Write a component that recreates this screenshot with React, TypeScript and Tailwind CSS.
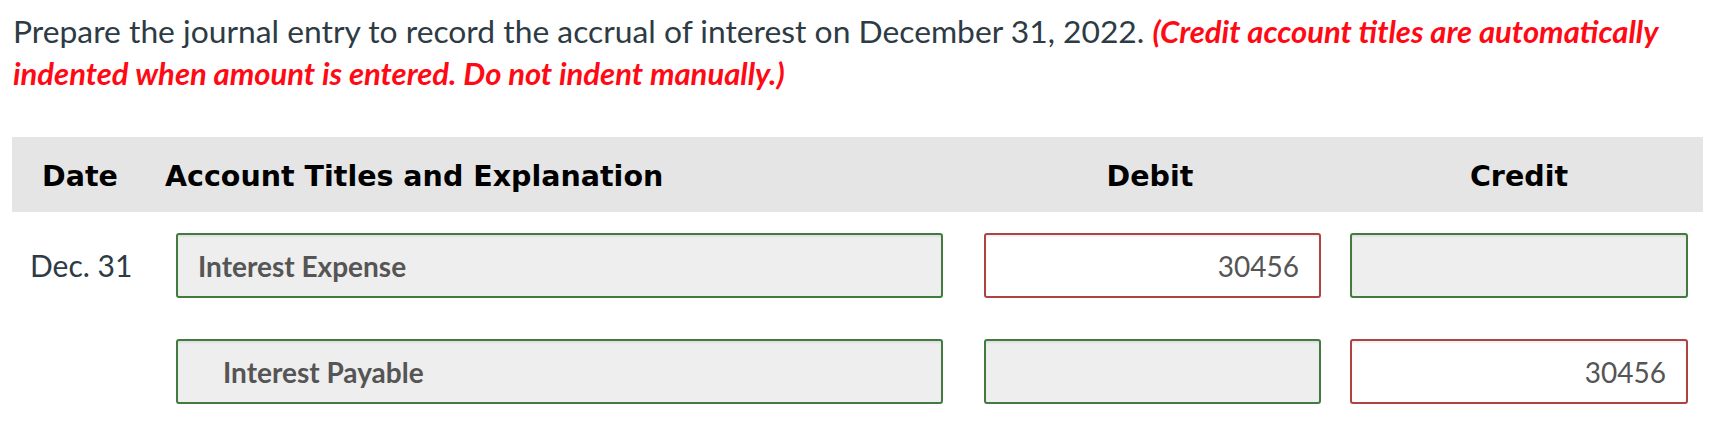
const lato = { fontFamily: 'Lato, "Open Sans", sans-serif' };
const head = { fontFamily: '"DejaVu Sans", Verdana, sans-serif' };

const rows = [
  { date: 'Dec. 31', account: 'Interest Expense', indent: false, debit: '30456', credit: '' },
  { date: '', account: 'Interest Payable', indent: true, debit: '', credit: '30456' },
];

const Field = ({ value, ok, align = 'right', indent = false, bold = false }: { value: string; ok: boolean; align?: 'left' | 'right'; indent?: boolean; bold?: boolean }) => (
  <div
    className={`h-[65px] rounded-[3px] border-2 flex items-center text-[28px] text-[#555555] shadow-[inset_0_2px_2px_rgba(0,0,0,0.06)] ${
      ok ? 'border-[#417b3f] bg-[#eeeeee]' : 'border-[#ad4343] bg-white'
    } ${align === 'right' ? 'justify-end pr-[20px]' : indent ? 'pl-[45px]' : 'pl-[20px]'} ${bold ? 'font-bold' : ''}`}
  >
    {value}
  </div>
);

export default function App() {
  return (
    <div className="bg-white min-h-[440px] text-[#2d3b45]" style={lato}>
      <p className="pl-[13px] pt-[10px] pr-[30px] text-[31.8px] leading-[42px]">
        Prepare the journal entry to record the accrual of interest on December 31, 2022.{' '}
        <span className="italic font-bold text-[31px] text-[#ff0a14]">
          (Credit account titles are automatically indented when amount is entered. Do not indent manually.)
        </span>
      </p>

      <div className="ml-[12px] mt-[43px] w-[1691px]">
        <div
          className="grid grid-cols-[153px_800px_370px_368px] h-[75px] items-center pt-[6px] bg-[#e5e5e5] text-black font-bold text-[28.5px]"
          style={head}
        >
          <div className="pl-[30px]">Date</div>
          <div>Account Titles and Explanation</div>
          <div className="text-center">Debit</div>
          <div className="text-center">Credit</div>
        </div>

        {rows.map((r, i) => (
          <div key={i} className="grid grid-cols-[153px_800px_370px_368px] items-center pt-[21px] pb-[20px]">
            <div className="pl-[18px] text-[30px]">{r.date}</div>
            <div className="pl-[11px] pr-[22px]">
              <Field value={r.account} ok align="left" indent={r.indent} bold />
            </div>
            <div className="pl-[19px] pr-[14px]">
              <Field value={r.debit} ok={r.debit === ''} />
            </div>
            <div className="pl-[15px] pr-[15px]">
              <Field value={r.credit} ok={r.credit === ''} />
            </div>
          </div>
        ))}
      </div>
    </div>
  );
}
